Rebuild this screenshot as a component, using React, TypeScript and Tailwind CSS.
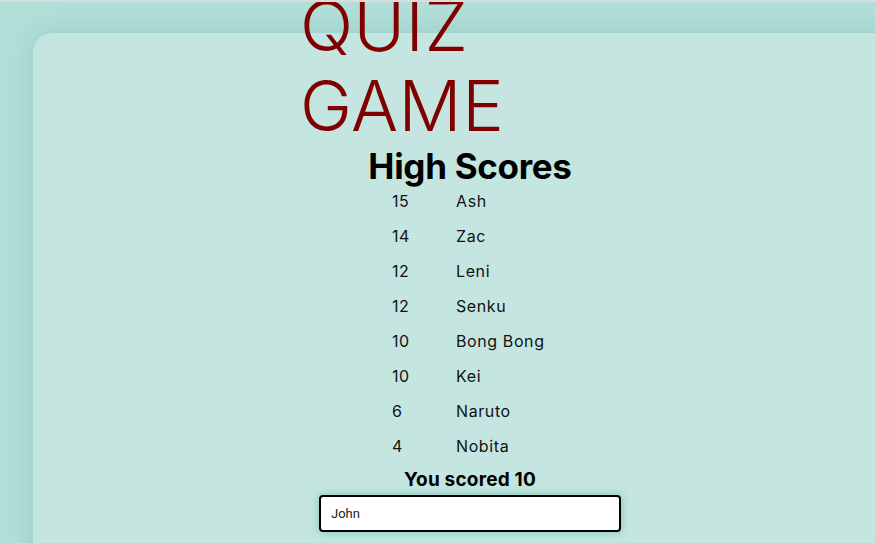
import React from "react";

const SCORES: [number, string][] = [
  [15, "Ash"],
  [14, "Zac"],
  [12, "Leni"],
  [12, "Senku"],
  [10, "Bong Bong"],
  [10, "Kei"],
  [6, "Naruto"],
  [4, "Nobita"],
];

export default function App() {
  return (
    <div className="w-[875px] h-[543px] overflow-hidden bg-[#b3dfd9] border-t-2 border-[#dcdcdc] font-['Inter',sans-serif]">
      <div className="ml-[33px] mt-[31px] w-[874px] h-[600px] rounded-[20px] bg-[#c5e6e0] shadow-[0_0_28px_rgba(60,150,130,0.25)]">
        <div className="mx-auto w-[340px] flex flex-col items-center">
          <h1 className="self-start -mt-[47px] text-[70px] leading-[80px] font-light text-[#800000] tracking-[0.5px] w-[220px]">
            QUIZ GAME
          </h1>
          <h2 className="-mt-[2px] text-[35px] leading-[44px] font-bold text-black tracking-[-0.3px]">
            High Scores
          </h2>
          <div className="self-start ml-[92px] -mt-[5px] flex flex-col text-[16px] text-[#111] tracking-[0.6px]">
            {SCORES.map(([score, name], i) => (
              <div key={i} className="h-[35px] flex items-center">
                <span className="w-[64px]">{score}</span>
                <span>{name}</span>
              </div>
            ))}
          </div>
          <p className="mt-[4px] text-[19px] leading-[26px] font-bold text-black tracking-[0.2px]">You scored 10</p>
          <input
            defaultValue="John"
            className="mt-[2px] w-[302px] h-[37px] px-[10px] rounded-[4px] border-2 border-black bg-white text-[13px] font-['Roboto',sans-serif] text-[#222] shadow-[0_0_10px_rgba(80,170,150,0.6)] outline-none"
          />
        </div>
      </div>
    </div>
  );
}
